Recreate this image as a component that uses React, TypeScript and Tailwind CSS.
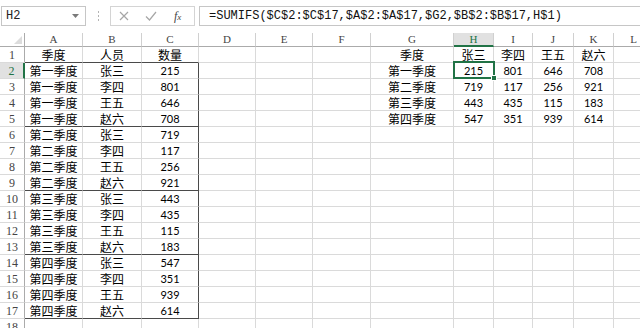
const quarters = ["第一季度", "第二季度", "第三季度", "第四季度"];
const people = ["张三", "李四", "王五", "赵六"];
const values = [
  [215, 801, 646, 708],
  [719, 117, 256, 921],
  [443, 435, 115, 183],
  [547, 351, 939, 614],
];
const letters = ["A", "B", "C", "D", "E", "F", "G", "H", "I", "J", "K", "L"];
const rows = Array.from({ length: 18 }, (_, i) => i + 1);

function cellText(row: number, col: number): string {
  if (row === 1) {
    if (col === 0) return "季度";
    if (col === 1) return "人员";
    if (col === 2) return "数量";
    if (col === 6) return "季度";
    if (col >= 7 && col <= 10) return people[col - 7];
    return "";
  }
  if (row >= 2 && row <= 17 && col <= 2) {
    const i = row - 2;
    const q = Math.floor(i / 4);
    const p = i % 4;
    if (col === 0) return quarters[q];
    if (col === 1) return people[p];
    return String(values[q][p]);
  }
  if (row >= 2 && row <= 5) {
    if (col === 6) return quarters[row - 2];
    if (col >= 7 && col <= 10) return String(values[row - 2][col - 7]);
  }
  return "";
}

function Toolbar() {
  return (
    <div className="flex h-[33px] items-start pt-[6px]">
      <div className="ml-px flex h-[20px] w-[85px] items-center justify-between border border-[#c6c6c6] pl-[4px] pr-[6px] font-['Liberation_Mono',monospace] text-[12px] text-[#222]">
        <span>H2</span>
        <svg width="7" height="4" viewBox="0 0 7 4">
          <polygon points="0,0 7,0 3.5,4" fill="#7a7a7a" />
        </svg>
      </div>
      <div className="flex h-[20px] w-[24px] flex-col items-center justify-center gap-[2px]">
        <span className="h-[2px] w-[1px] bg-[#b4b4b4]" />
        <span className="h-[2px] w-[1px] bg-[#b4b4b4]" />
        <span className="h-[2px] w-[1px] bg-[#b4b4b4]" />
      </div>
      <div className="flex h-[20px] w-[85px] items-center border border-[#d4d4d4]">
        <svg className="ml-[8px]" width="10" height="10" viewBox="0 0 10 10">
          <path d="M1 1L9 9M9 1L1 9" stroke="#a6a6a6" strokeWidth="1.2" />
        </svg>
        <svg className="ml-[16px]" width="12" height="10" viewBox="0 0 12 10">
          <path d="M1 5.5L4.5 9L11 1" stroke="#a6a6a6" strokeWidth="1.2" fill="none" />
        </svg>
        <span className="ml-[17px] font-['Liberation_Serif',serif] text-[12px] italic leading-none text-[#444]">
          f<span className="text-[9px]">x</span>
        </span>
      </div>
      <div className="ml-[4px] flex h-[20px] flex-1 items-center border border-r-0 border-[#c6c6c6] pl-[9px] font-['Liberation_Mono',monospace] text-[12px] text-[#111]">
        =SUMIFS($C$2:$C$17,$A$2:$A$17,$G2,$B$2:$B$17,H$1)
      </div>
    </div>
  );
}

function Cell({ row, col }: { row: number; col: number }) {
  const text = cellText(row, col);
  const numeric = /^\d+$/.test(text);
  const bottomDark = col <= 2 && row % 4 === 1 && row <= 17;
  const rightDark = col === 2 && row >= 2 && row <= 17;
  const selected = row === 2 && col === 7;
  return (
    <div
      className={
        "relative flex items-center justify-center border-b border-r text-black " +
        (bottomDark ? "border-b-[#4a4a4a] " : "border-b-[#dadada] ") +
        (rightDark ? "border-r-[#4a4a4a] " : "border-r-[#dadada] ") +
        (numeric
          ? "font-['Lato',sans-serif] text-[11px]"
          : "font-['Noto_Sans_CJK_SC',sans-serif] text-[12px]")
      }
    >
      <span className="leading-none">{text}</span>
      {selected && (
        <div className="pointer-events-none absolute -left-px -top-[2px] z-10 h-[18px] w-[42px] border-2 border-[#217346]">
          <div className="absolute -bottom-[4px] -right-[4px] h-[6px] w-[6px] border border-white bg-[#217346]" />
        </div>
      )}
    </div>
  );
}

export default function App() {
  return (
    <div className="h-[328px] w-[640px] overflow-hidden bg-white">
      <Toolbar />
      <div className="grid grid-cols-[25px_58px_59px_57px_57px_57px_58px_83px_40px_39px_41px_40px_40px] grid-rows-[14px_repeat(18,16px)]">
        <div className="flex items-end justify-end border-b border-r border-b-[#ababab] border-r-[#ababab] pb-[2px] pr-[2px]">
          <svg width="8" height="8" viewBox="0 0 8 8">
            <polygon points="8,0 8,8 0,8" fill="#dcdcdc" />
          </svg>
        </div>
        {letters.map((l, i) => (
          <div
            key={l}
            className={
              "flex items-center justify-center border-r font-['Liberation_Serif',serif] text-[11px] leading-none " +
              (i === 7
                ? "border-b-2 border-b-[#217346] border-r-[#d0d0d0] bg-[#e1e1e1] text-[#217346]"
                : "border-b border-b-[#ababab] border-r-[#d0d0d0] text-[#444]")
            }
          >
            {l}
          </div>
        ))}
        {rows.map((r) => [
          <div
            key={"h" + r}
            className={
              "flex items-center justify-center border-b border-b-[#dadada] font-['Liberation_Serif',serif] text-[12px] leading-none " +
              (r === 2
                ? "border-r-2 border-r-[#217346] bg-[#e1e1e1] text-[#217346]"
                : "border-r border-r-[#ababab] text-[#444]")
            }
          >
            {r}
          </div>,
          ...letters.map((_, c) => <Cell key={r + "-" + c} row={r} col={c} />),
        ])}
      </div>
    </div>
  );
}
